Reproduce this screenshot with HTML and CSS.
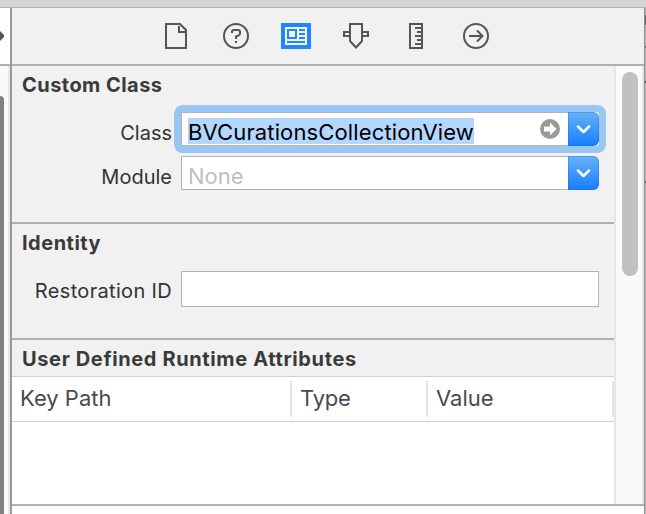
FILE: index.html
```
<!DOCTYPE html>
<html lang="en">
<head>
<meta charset="utf-8">
<title>Identity Inspector</title>
<link rel="stylesheet" href="styles.css">
</head>
<body>
<div class="window">
  <div class="titlebar"></div>
  <div class="main">
    <div class="editor">
      <div class="editor-bar"><svg width="10" height="56" viewBox="0 0 10 56"><path d="M0 23L4 27V29L0 33Z" fill="#555"/></svg></div>
      <div class="editor-scroll"><div class="editor-thumb"></div></div>
    </div>
    <div class="inspector">
      <nav class="tabs">
        <svg class="tab" viewBox="0 0 30 26"><path d="M5 1H19L25 7V25H5Z M18 3V9H24" fill="none" stroke="#555" stroke-width="2"/></svg>
        <svg class="tab" viewBox="0 0 30 26"><circle cx="15" cy="13" r="12" fill="none" stroke="#555" stroke-width="2"/><path d="M11 10V8.5Q11 7 13 7H17Q19 7 19 9V10.5Q19 12 17.5 12.5L15 13.5V16M15 18V20" fill="none" stroke="#555" stroke-width="2"/></svg>
        <svg class="tab" viewBox="0 0 30 26"><path d="M0 0H30V26H0Z" fill="#2086ff"/><path d="M4 4H26V22H4Z" fill="#f2f7ff"/><path d="M7 7H15V15H7ZM18 7H24M18 11H24M18 15H24M6 19H24" fill="none" stroke="#2086ff" stroke-width="2"/></svg>
        <svg class="tab" viewBox="0 0 30 26"><path d="M9 1H21V18L15 24.500L9 18ZM8 9H3V13H8M22 9H27V13H22" fill="none" stroke="#555" stroke-width="2"/></svg>
        <svg class="tab" viewBox="0 0 30 26"><path d="M9 1H21V25H9ZM14 5H20M16 9H20M14 13H20M16 17H20M14 21H20" fill="none" stroke="#555" stroke-width="2"/></svg>
        <svg class="tab" viewBox="0 0 30 26"><circle cx="15" cy="13" r="12" fill="none" stroke="#555" stroke-width="2"/><path d="M8 13H21.500M16 7.500L21.500 13L16 18.500" fill="none" stroke="#555" stroke-width="2"/></svg>
      </nav>
      <div class="content">
        <div class="panes">
          <section class="pane custom">
            <h2 class="t-custom">Custom Class</h2>
            <div class="row">
              <label>Class</label>
              <div class="combo focused">
                <div class="value"><span class="selected">BVCurationsCollectionView</span>
                  <svg class="jump" width="20" height="20" viewBox="0 0 20 20"><circle cx="10" cy="10" r="10" fill="#999"/><path d="M4 7.500H10V3.500L16.500 10L10 16.500V12.500H4Z" fill="#fff"/></svg>
                </div>
                <div class="arrow"><svg width="31" height="34" viewBox="0 0 31 34"><path d="M10 14.500L15.500 20L21 14.500" fill="none" stroke="#fff" stroke-width="2.500" stroke-linecap="round" stroke-linejoin="round"/></svg></div>
              </div>
            </div>
            <div class="row second">
              <label>Module</label>
              <div class="combo">
                <div class="value"><span class="placeholder">None</span></div>
                <div class="arrow"><svg width="31" height="34" viewBox="0 0 31 34"><path d="M10 14.500L15.500 20L21 14.500" fill="none" stroke="#fff" stroke-width="2.500" stroke-linecap="round" stroke-linejoin="round"/></svg></div>
              </div>
            </div>
          </section>
          <section class="pane identity">
            <h2 class="t-identity">Identity</h2>
            <div class="row">
              <label class="t-restore">Restoration ID</label>
              <div class="field"></div>
            </div>
          </section>
          <section class="attributes">
            <h2 class="t-attrs">User Defined Runtime Attributes</h2>
            <div class="table-head">
              <div class="th key"><span>Key Path</span></div>
              <div class="th type"><span>Type</span></div>
              <div class="th val"><span>Value</span></div>
            </div>
          </section>
        </div>
        <div class="scrollbar"><div class="thumb"></div></div>
      </div>
      <div class="footer"></div>
    </div>
    <div class="edge"></div>
  </div>
</div>
</body>
</html>
```
FILE: styles.css
```
* { box-sizing: border-box; }
body {
  margin: 0;
  font-family: Inter, "Liberation Sans", sans-serif;
  font-size: 20px;
  color: #333;
  overflow: hidden;
}
svg { display: block; flex: none; }
.window { width: 646px; height: 514px; display: flex; flex-direction: column; background: #fff; }
.titlebar { height: 8px; background: #d4d4d4; border-bottom: 1px solid #b0b0b0; }
.main { flex: 1; display: flex; }
.editor { width: 10px; display: flex; flex-direction: column; }
.editor-bar { height: 58px; border-bottom: 2px solid #b0b0b0; }
.editor-scroll { flex: 1; padding-top: 30px; background: #fafafa; border-right: 2px solid #e8e8e8; }
.editor-thumb { width: 4px; height: 418px; background: #82807f; border-top-right-radius: 4px; }
.inspector { width: 634px; border-left: 2px solid #999; display: flex; flex-direction: column; }
.tabs {
  height: 58px;
  display: flex;
  justify-content: center;
  gap: 30px;
  padding-top: 15px;
  padding-right: 4px;
  background: #f1f1f1;
  border-bottom: 2px solid #b0b0b0;
}
.tab { width: 30px; height: 26px; }
.content { height: 438px; display: flex; }
.panes { width: 602px; }
.pane { background: #f1f1f1; border-bottom: 2px solid #b0b0b0; }
.custom { height: 158px; }
.identity { height: 116px; }
h2 { margin: 0; padding-left: 10px; height: 38px; line-height: 38px; font-size: 20px; font-weight: 700; color: #3a3a3a; white-space: nowrap; }
.t-custom { letter-spacing: .45px; }
.t-identity { letter-spacing: .5px; }
.t-attrs { letter-spacing: .63px; }
.row { display: flex; margin-top: 8px; height: 34px; }
.second { margin-top: 10px; }
label { width: 160px; margin-right: 9px; text-align: right; line-height: 42px; white-space: nowrap; }
.t-restore { letter-spacing: .33px; line-height: 40px; }
.combo { width: 418px; height: 34px; display: flex; font-size: 22px; }
.focused { box-shadow: 0 0 0 7px #9ac6f4; border-radius: 3px; background: #fff; }
.value {
  width: 387px;
  display: flex;
  justify-content: space-between;
  padding: 5px 8px 0 6px;
  background: #fff;
  border: 1px solid #b3b3b3;
  border-right: 0;
}
.value span { height: 26px; line-height: 29px; }
.selected { background: #b3d7ff; color: #000; letter-spacing: .13px; }
.placeholder { color: #bfbfbf; }
.jump { margin-top: 1px; }
.arrow { width: 31px; height: 34px; background: linear-gradient(#68b2fa, #167efb); border-radius: 0 6px 6px 0; box-shadow: inset 0 0 0 1px rgba(20, 105, 220, .35); }
.identity .row { margin-top: 9px; height: 36px; }
.field { width: 418px; height: 36px; background: #fff; border: 1px solid #b3b3b3; }
.attributes { height: 164px; background: #fff; }
.attributes h2 { height: 37px; line-height: 38px; background: #f1f1f1; border-bottom: 1px solid #d0d0d0; }
.table-head { height: 45px; display: flex; padding: 4px 0; border-bottom: 1px solid #d0d0d0; font-size: 22px; color: #4a4a4a; }
.th { height: 36px; line-height: 34px; border-right: 2px solid #e4e4e4; }
.key { width: 280px; padding-left: 8px; }
.type { width: 136px; padding-left: 8px; letter-spacing: -.2px; }
.val { width: 186px; padding-left: 8px; }
.scrollbar { width: 30px; padding: 6px 0 0 6px; background: #fafafa; border: solid #e6e6e6; border-width: 0 2px; }
.thumb { width: 16px; height: 204px; border-radius: 8px; background: #c1c1c1; }
.footer { height: 10px; border-top: 2px solid #b0b0b0; background: #fff; }
.edge {
  width: 2px;
  border-left: 1px solid #8f8f8f;
  background: linear-gradient(#bababa 7px, #6a6266 7px 17px, #bababa 17px 38px, #777 38px 40px, #bababa 40px 73px, #1c6a22 73px 75px, #bababa 75px 173px, #5e6a40 173px 175px, #bababa 175px);
}
```
